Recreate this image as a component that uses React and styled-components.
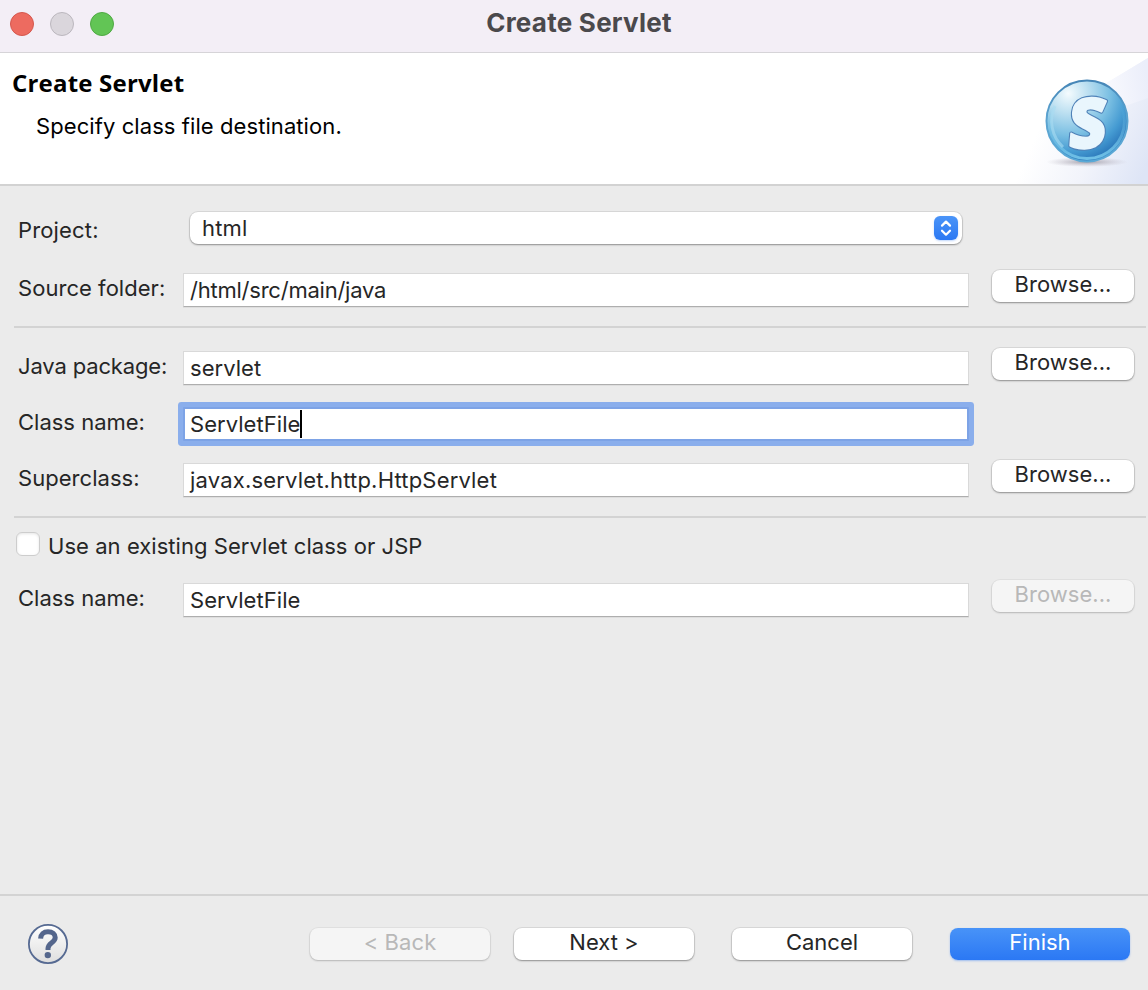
import React from "react";
import styled, { createGlobalStyle, css } from "styled-components";

const GlobalStyle = createGlobalStyle`
  * { box-sizing: border-box; }
  body {
    margin: 0;
    background: #ebebeb;
    font-family: Inter, "Liberation Sans", sans-serif;
    font-size: 22px;
    color: #262626;
  }
`;

const Dialog = styled.main`
  display: flex;
  flex-direction: column;
  width: 1148px;
  height: 990px;
  overflow: hidden;
  background: #ebebeb;
`;

const TitleBar = styled.header`
  display: grid;
  grid-template-columns: 200px 1fr 200px;
  height: 53px;
  padding-left: 10px;
  background: #f3eef6;
  border-bottom: 1px solid #d6d4d8;
`;

const Lights = styled.div`
  display: flex;
  gap: 16px;
  padding-top: 12px;
`;

const Light = styled.span`
  width: 24px;
  height: 24px;
  border-radius: 50%;
  background: ${(p) => p.$fill};
  border: 1px solid ${(p) => p.$edge};
`;

const WindowTitle = styled.h1`
  margin: 0;
  text-align: center;
  font-size: 26px;
  line-height: 46px;
  font-weight: 700;
  letter-spacing: 0.25px;
  color: #4b494c;
  white-space: nowrap;
`;

const Banner = styled.section`
  display: flex;
  justify-content: space-between;
  height: 133px;
  background: #fff;
  border-bottom: 2px solid #d2d2d2;
`;

const BannerText = styled.div`
  padding: 13px 0 0 12px;
  color: #000;
`;

const Heading = styled.h2`
  margin: 0;
  font-family: "Open Sans", "Noto Sans", sans-serif;
  font-size: 24px;
  line-height: 34px;
  font-weight: 700;
  letter-spacing: 0.2px;
`;

const Description = styled.p`
  margin: 9px 0 0 24px;
  line-height: 34px;
  letter-spacing: 0.08px;
`;

const Form = styled.form`
  flex: 1;
  display: flex;
  flex-direction: column;
  padding: 26px 0 0 14px;
`;

const Row = styled.div`
  display: grid;
  grid-template-columns: 165px 786px 143px;
  align-items: start;
  height: 38px;
  padding-left: 4px;
  margin-bottom: ${(p) => p.$below || 0}px;
`;

const Label = styled.label`
  padding-top: 1px;
  line-height: 34px;
  letter-spacing: ${(p) => p.$track ?? 0}px;
  white-space: nowrap;
`;

const Select = styled.div`
  display: flex;
  align-items: center;
  justify-content: space-between;
  width: 772px;
  height: 32px;
  margin-left: 7px;
  padding: 0 4px 0 12px;
  border-radius: 8px;
  background: #fff;
  box-shadow: 0 0 0 1px rgba(0, 0, 0, 0.07), 0 1px 2px rgba(0, 0, 0, 0.35);
  line-height: 32px;
  letter-spacing: 0.2px;
`;

const Stepper = styled.span`
  display: flex;
  width: 24px;
  height: 24px;
  border-radius: 6px;
  background: linear-gradient(#4a94f8, #2b78f3);
  box-shadow: 0 1px 2px rgba(43, 120, 243, 0.3);
`;

const Field = styled.div`
  display: flex;
  align-items: center;
  height: 34px;
  margin-top: 3px;
  padding-left: 6px;
  background: #fff;
  border: 1px solid #d9d9d9;
  border-bottom-color: #aeaeae;
  box-shadow: 0 1px 0 #dedede;
  line-height: 32px;
  letter-spacing: ${(p) => p.$track ?? 0.05}px;
  ${(p) =>
    p.$focused &&
    css`
      border: 2px solid #7da3e6;
      padding-left: 5px;
      box-shadow: 0 0 0 5px #8aaeec;
      border-radius: 1px;
      line-height: 30px;
    `}
`;

const Caret = styled.span`
  width: 2px;
  height: 28px;
  margin-right: -2px;
  background: #000;
`;

const Button = styled.button`
  width: ${(p) => p.$width || 142}px;
  height: 32px;
  padding: 0 0 4px;
  border: 0;
  border-radius: 8px;
  background: #fff;
  box-shadow: 0 0 0 1px rgba(0, 0, 0, 0.07), 0 1px 2px rgba(0, 0, 0, 0.35);
  color: #262626;
  font: inherit;
  line-height: 28px;
  letter-spacing: ${(p) => p.$track || 0}px;
  white-space: nowrap;
  &:disabled {
    background: #f5f5f5;
    color: #b8b8b8;
    box-shadow: 0 0 0 1px rgba(0, 0, 0, 0.04), 0 1px 2px rgba(0, 0, 0, 0.2);
  }
  ${(p) =>
    p.$primary &&
    css`
      background: linear-gradient(#4893f8, #2b78f4);
      color: #fff;
      box-shadow: 0 1px 2px rgba(43, 120, 244, 0.4);
    `}
`;

const BrowseCell = styled.div`
  padding-left: 23px;
`;

const Divider = styled.hr`
  width: 1132px;
  height: 2px;
  margin: 0 0 ${(p) => p.$below}px;
  border: 0;
  background: #d3d3d3;
`;

const CheckRow = styled.label`
  display: flex;
  gap: 8px;
  height: 48px;
  padding-left: 2px;
  line-height: 28px;
  letter-spacing: 0.05px;
`;

const CheckBox = styled.span`
  width: 24px;
  height: 24px;
  border-radius: 6px;
  border: 1px solid #cdcdcd;
  background: #fff;
  box-shadow: inset 0 1px 3px rgba(0, 0, 0, 0.1);
`;

const Footer = styled.footer`
  display: flex;
  align-items: flex-start;
  height: 96px;
  padding: 28px 18px 0 28px;
  border-top: 2px solid #d3d3d3;
`;

const Actions = styled.div`
  display: flex;
  margin-left: auto;
  padding-top: 4px;
`;

const Nav = styled.div`
  display: flex;
  gap: 24px;
  margin-right: 38px;
`;

const Final = styled.div`
  display: flex;
  gap: 38px;
`;

const LogoLetter = styled.text`
  font-family: "Open Sans", sans-serif;
  font-size: 71px;
  font-weight: 800;
  text-anchor: middle;
  fill: #e9f6fd;
  stroke: #4f82b8;
  stroke-width: 4.4px;
  stroke-linejoin: round;
  paint-order: stroke;
`;

const LogoLetterFace = styled(LogoLetter)`
  stroke: #e9f6fd;
  stroke-width: 2px;
`;

function BrowseButton(props) {
  return (
    <BrowseCell>
      <Button type="button" $track={0.05} {...props}>
        Browse...
      </Button>
    </BrowseCell>
  );
}

function ServletLogo() {
  return (
    <svg width="140" height="131" viewBox="0 0 140 131">
      <defs>
        <linearGradient id="sweep" gradientUnits="userSpaceOnUse" x1="35" y1="65" x2="140" y2="110">
          <stop offset="0" stopColor="#fff" />
          <stop offset="0.5" stopColor="#f2f4fb" />
          <stop offset="1" stopColor="#dee5f6" />
        </linearGradient>
        <linearGradient id="ray" gradientUnits="userSpaceOnUse" x1="85" y1="40" x2="140" y2="30">
          <stop offset="0" stopColor="#fdfdff" />
          <stop offset="1" stopColor="#ebeefa" />
        </linearGradient>
        <linearGradient id="rim" x1="0" y1="0" x2="0" y2="1">
          <stop offset="0" stopColor="#4585b6" />
          <stop offset="0.45" stopColor="#5ba3d0" />
          <stop offset="1" stopColor="#5aa9d6" />
        </linearGradient>
        <radialGradient id="ball" cx="0.27" cy="0.16" r="0.92">
          <stop offset="0" stopColor="#f4fbfe" />
          <stop offset="0.28" stopColor="#b9def0" />
          <stop offset="0.55" stopColor="#7cc0e3" />
          <stop offset="0.78" stopColor="#459bd2" />
          <stop offset="0.92" stopColor="#2f7dbe" />
          <stop offset="1" stopColor="#4ba3d8" />
        </radialGradient>
        <linearGradient id="glow" x1="0" y1="0" x2="0" y2="1">
          <stop offset="0.3" stopColor="#6fc0e6" stopOpacity="0" />
          <stop offset="1" stopColor="#6fc0e6" />
        </linearGradient>
        <radialGradient id="shade">
          <stop offset="0" stopColor="#8f8a96" stopOpacity="0.8" />
          <stop offset="1" stopColor="#b9b4c0" stopOpacity="0" />
        </radialGradient>
      </defs>
      <path d="M140 5 L82 40 L35 70 L0 131 H140 Z" fill="url(#sweep)" />
      <path d="M140 5 L82 40 L80 66 L140 45 Z" fill="url(#ray)" />
      <ellipse cx="79" cy="109" rx="41" ry="5" fill="url(#shade)" />
      <circle cx="79" cy="68" r="40.5" fill="url(#ball)" stroke="url(#rim)" strokeWidth="2" />
      <circle cx="79" cy="68" r="37.5" fill="none" stroke="url(#glow)" strokeWidth="3" />
      <path d="M47 53 A35 35 0 0 0 55 94" fill="none" stroke="#a8dcf2" strokeWidth="3" opacity="0.6" />
      <g transform="translate(78 95) skewX(-4) scale(0.92 0.98)">
        <LogoLetter>S</LogoLetter>
        <LogoLetterFace aria-hidden="true">S</LogoLetterFace>
      </g>
    </svg>
  );
}

function HelpIcon() {
  return (
    <svg width="40" height="40" viewBox="0 0 40 40">
      <defs>
        <linearGradient id="help" x1="0" y1="0" x2="0" y2="1">
          <stop offset="0" stopColor="#fff" />
          <stop offset="1" stopColor="#dedede" />
        </linearGradient>
      </defs>
      <circle cx="20" cy="20" r="19.1" fill="url(#help)" stroke="#566a92" strokeWidth="1.8" />
      <path
        d="M12.6 14.6 C12.8 10.2 15.6 7.8 20 7.8 C24.6 7.8 27.2 10.1 27.2 13.6 C27.2 19 20 18.7 20 24.6 V26"
        fill="none"
        stroke="#54668c"
        strokeWidth="5"
      />
      <circle cx="19.8" cy="31.1" r="3.2" fill="#54668c" />
    </svg>
  );
}

export default function App() {
  return (
    <Dialog>
      <GlobalStyle />
      <TitleBar>
        <Lights>
          <Light $fill="#ed6b60" $edge="#d5574d" />
          <Light $fill="#dad6dc" $edge="#bbb7be" />
          <Light $fill="#62c555" $edge="#4fa943" />
        </Lights>
        <WindowTitle>Create Servlet</WindowTitle>
      </TitleBar>

      <Banner>
        <BannerText>
          <Heading>Create Servlet</Heading>
          <Description>Specify class file destination.</Description>
        </BannerText>
        <ServletLogo />
      </Banner>

      <Form>
        <Row $below={20}>
          <Label $track={0.15}>Project:</Label>
          <Select>
            html
            <Stepper>
              <svg width="24" height="24" viewBox="0 0 24 24">
                <path
                  d="M8 9.6 L12 5.6 L16 9.6 M8 14.7 L12 18.7 L16 14.7"
                  fill="none"
                  stroke="#fff"
                  strokeWidth="2.2"
                  strokeLinecap="round"
                  strokeLinejoin="round"
                />
              </svg>
            </Stepper>
          </Select>
        </Row>
        <Row $below={18}>
          <Label $track={0.04}>Source folder:</Label>
          <Field $track={-0.23}>/html/src/main/java</Field>
          <BrowseButton />
        </Row>
        <Divider $below={20} />
        <Row $below={18}>
          <Label $track={-0.15}>Java package:</Label>
          <Field>servlet</Field>
          <BrowseButton />
        </Row>
        <Row $below={18}>
          <Label>Class name:</Label>
          <Field $focused>
            ServletFile
            <Caret />
          </Field>
        </Row>
        <Row $below={18}>
          <Label $track={0.04}>Superclass:</Label>
          <Field $track={0.18}>javax.servlet.http.HttpServlet</Field>
          <BrowseButton />
        </Row>
        <Divider $below={14} />
        <CheckRow>
          <CheckBox />
          Use an existing Servlet class or JSP
        </CheckRow>
        <Row>
          <Label>Class name:</Label>
          <Field>ServletFile</Field>
          <BrowseButton disabled />
        </Row>
      </Form>

      <Footer>
        <HelpIcon />
        <Actions>
          <Nav>
            <Button $width={180} $track={0.1} disabled>&lt; Back</Button>
            <Button $width={180}>Next &gt;</Button>
          </Nav>
          <Final>
            <Button $width={180}>Cancel</Button>
            <Button $width={180} $primary>Finish</Button>
          </Final>
        </Actions>
      </Footer>
    </Dialog>
  );
}
